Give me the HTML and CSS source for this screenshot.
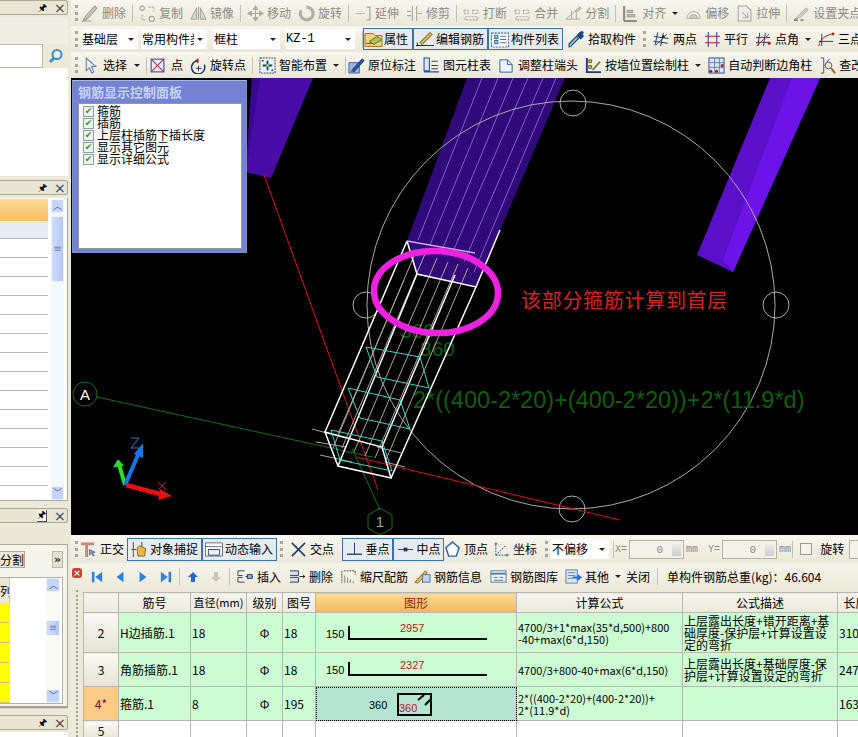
FILE: index.html
```html
<!DOCTYPE html>
<html lang="zh-CN">
<head>
<meta charset="utf-8">
<title>钢筋显示控制面板</title>
<link rel="stylesheet" href="styles.css">
</head>
<body>
<svg class="defs" width="0" height="0" aria-hidden="true">
  <symbol id="i-del" viewBox="0 0 16 16"><path d="M1 15l4-2 9-10-2-2-9 10z" fill="#c8c8c0" stroke="#a0a098"/><path d="M1 15h8" stroke="#a0a098"/></symbol>
  <symbol id="i-copy" viewBox="0 0 16 16"><circle cx="3" cy="3" r="2" fill="none" stroke="#a0a098"/><circle cx="12" cy="13" r="2.5" fill="none" stroke="#a0a098"/><path d="M9 2l5 0M14 2v4M3 9v5h4" stroke="#b0b0a8" fill="none" stroke-dasharray="2 1"/></symbol>
  <symbol id="i-mirror" viewBox="0 0 18 16"><path d="M1 14L7 2v12zM17 14L11 2v12z" fill="#d8d8d0" stroke="#a0a098"/><path d="M9 1v14" stroke="#a0a098"/></symbol>
  <symbol id="i-move" viewBox="0 0 16 16"><path d="M8 1v14M1 8h14M8 1L6 4h4zM8 15l-2-3h4zM1 8l3-2v4zM15 8l-3-2v4z" stroke="#a8a8a0" fill="#c0c0b8"/></symbol>
  <symbol id="i-rot" viewBox="0 0 16 16"><path d="M8 2a6 6 0 1 1-5 3" fill="none" stroke="#b0b0a8" stroke-width="3"/></symbol>
  <symbol id="i-ext" viewBox="0 0 16 16"><path d="M1 8h8" stroke="#a8a8a0" stroke-dasharray="2 1"/><path d="M11 2h3v12h-3" fill="none" stroke="#a0a098"/></symbol>
  <symbol id="i-trim" viewBox="0 0 16 16"><path d="M6 1v14M10 1v14M1 6h4M1 10h4M11 8h4" stroke="#a8a8a0" fill="none"/></symbol>
  <symbol id="i-brk" viewBox="0 0 16 16"><path d="M1 5h4v3H1zM9 5h5v3H9zM2 11h12v3H2z" fill="none" stroke="#a8a8a0" stroke-dasharray="2 1"/></symbol>
  <symbol id="i-split" viewBox="0 0 18 16"><path d="M1 14L15 2M1 14h15M7 14V5M12 14V6" stroke="#a8a8a0" fill="none"/><path d="M11 5l5-4 1 2-5 4z" fill="#c8c8c0" stroke="#a8a8a0"/></symbol>
  <symbol id="i-align" viewBox="0 0 16 16"><path d="M2 1v14M2 15h12" stroke="#8c8c84" stroke-width="2" fill="none"/><path d="M5 5h5v2H5zM5 9h7v2H5z" fill="#c0c0b8" stroke="#a0a098"/></symbol>
  <symbol id="i-off" viewBox="0 0 18 16"><path d="M2 13a7 7 0 0 1 14 0z" fill="none" stroke="#a8a8a0"/><path d="M5 13a4 4 0 0 1 8 0z" fill="#d0d0c8" stroke="#a8a8a0"/></symbol>
  <symbol id="i-str" viewBox="0 0 16 16"><path d="M2 1h8l4 4v10H2z" fill="#eee" stroke="#a8a8a0"/><path d="M6 7l5 5M6 12h5v-5" stroke="#b0b0a8" fill="none"/></symbol>
  <symbol id="i-grip" viewBox="0 0 18 16"><path d="M2 14l6-6 6-6 2 2-8 8z" fill="#d0d0c8" stroke="#a8a8a0"/><path d="M1 15h4M8 15h3" stroke="#808078" stroke-width="2"/></symbol>
  <symbol id="i-attr" viewBox="0 0 20 16"><path d="M1 2h8l2 2h7v11H1z" fill="#f3d27c" stroke="#a57a20"/><path d="M5 10l8-5 5 3-8 5z" fill="#a0c860" stroke="#7a6a20"/><path d="M2 12h6" stroke="#c04020"/></symbol>
  <symbol id="i-edit" viewBox="0 0 20 16"><path d="M1 14h18" stroke="#000"/><path d="M2 11l1 3h16" stroke="#303030" fill="none"/><path d="M5 11L15 1l2 2L7 13z" fill="#e8c050" stroke="#604010"/></symbol>
  <symbol id="i-list" viewBox="0 0 18 16"><path d="M1 2h16v13H1z" fill="#fff" stroke="#4070a0" stroke-dasharray="2 1"/><path d="M4 4h3v3H4zM4 9h3v3H4z" fill="#9cc0e0" stroke="#4070a0"/><path d="M9 5h6M9 8h6M9 11h6" stroke="#5070a0"/></symbol>
  <symbol id="i-pick" viewBox="0 0 16 16"><path d="M1 15l2-1 7-7-2-2-7 7z" fill="#8cc0e0" stroke="#1a4880"/><path d="M8 4l4 4 3-3-1-2 1-2-2-1-2 1z" fill="#1a4880"/></symbol>
  <symbol id="i-two" viewBox="0 0 18 16"><path d="M4 1L3 15M10 1L9 15M1 6h15M1 11h15" stroke="#1a3a7c" fill="none" transform="rotate(8 9 8)"/><path d="M3 14L15 2" stroke="#505050"/><circle cx="11" cy="5" r="1.5" fill="#202020"/></symbol>
  <symbol id="i-par" viewBox="0 0 16 16"><path d="M4 1v14M12 1v14" stroke="#2a4a8c" fill="none"/><path d="M1 5h14M1 11h14" stroke="#b02020" fill="none"/></symbol>
  <symbol id="i-ang" viewBox="0 0 18 16"><path d="M5 1L3 15M11 1L9 15M1 6h15M1 11h15" stroke="#1a3a7c" fill="none"/><path d="M2 15L15 2" stroke="#b02020"/><circle cx="15" cy="12" r="1.6" fill="#c01010"/></symbol>
  <symbol id="i-tri" viewBox="0 0 18 16"><path d="M4 2v13M1 10h15" stroke="#1a3a7c" fill="none"/><path d="M1 15C2 7 9 3 16 2" stroke="#c01010" fill="none"/><circle cx="16" cy="2" r="1.4" fill="#c01010"/></symbol>
  <symbol id="i-sel" viewBox="0 0 16 16"><path d="M4 1v12l3-3 2 5 2-1-2-5h4z" fill="#e8eef4" stroke="#6080a8"/></symbol>
  <symbol id="i-pt" viewBox="0 0 16 16"><rect x="2" y="2" width="12" height="12" fill="#e8eefa" stroke="#2848a0"/><path d="M2 2l12 12M14 2L2 14" stroke="#b03040"/></symbol>
  <symbol id="i-rp" viewBox="0 0 18 18"><path d="M8 4a7 7 0 1 0 7 4" fill="none" stroke="#203860" stroke-width="1.6"/><path d="M9 1l-4 3 4 3z" fill="#a02020"/><path d="M9 9v6M6 12h6" stroke="#203860"/></symbol>
  <symbol id="i-smart" viewBox="0 0 18 18"><rect x="1" y="1" width="16" height="16" fill="#e8f0f4" stroke="#404040" stroke-dasharray="2 1"/><path d="M9 4v4M9 10v4M4 9h4M10 9h4" stroke="#1a5040" stroke-width="2"/><circle cx="4" cy="4" r="1" fill="#c02020"/><circle cx="14" cy="14" r="1" fill="#2040c0"/></symbol>
  <symbol id="i-mark" viewBox="0 0 18 18"><path d="M1 6h11v11H1z" fill="#9cb8e0" stroke="#3860a8"/><path d="M4 14L15 2l2 2L6 16z" fill="#2858b0" stroke="#183070"/><path d="M3 16l2-3" stroke="#c03020"/></symbol>
  <symbol id="i-tab" viewBox="0 0 16 16"><path d="M1 1h5v12h-5zM1 14h14" stroke="#2850a0" fill="#dce8f8"/><path d="M8 4h6M8 8h6M8 11h6" stroke="#404040"/></symbol>
  <symbol id="i-adj" viewBox="0 0 18 18"><path d="M2 3h8l5 5v8H2z" fill="#f0f4fa" stroke="#3060a8"/><path d="M10 3v5h5" fill="none" stroke="#3060a8"/></symbol>
  <symbol id="i-wall" viewBox="0 0 18 18"><path d="M2 1v15h15" stroke="#1a3a90" stroke-width="2" fill="none"/><path d="M4 3h3v3H4zM4 9h3v3H4z" fill="#e8c050" stroke="#805010"/><path d="M8 14L16 5" stroke="#808040" stroke-width="2"/></symbol>
  <symbol id="i-auto" viewBox="0 0 18 18"><rect x="1" y="1" width="16" height="16" fill="#dce8f8" stroke="#304890"/><path d="M7 1v16M12 1v16M1 6h16M1 11h16" stroke="#6080c0"/><circle cx="3" cy="15" r="1.6" fill="#c01010"/><circle cx="9" cy="15" r="1.6" fill="#c01010"/><circle cx="15" cy="9" r="1.6" fill="#c01010"/></symbol>
  <symbol id="i-chk" viewBox="0 0 18 18"><path d="M2 1h3v16H2M6 9l5-7" stroke="#2850a0" fill="none"/><circle cx="10" cy="9" r="3.6" fill="#e8e8d8" stroke="#705030"/><path d="M13 12l4 5" stroke="#906030" stroke-width="2"/></symbol>
  <symbol id="i-ortho" viewBox="0 0 18 18"><path d="M1 3h14M7 3v14" stroke="#c08880" stroke-width="3" fill="none"/><path d="M10 9v6l2-2 2 3 1-1-2-3h3z" fill="#90a0b0" stroke="#607080"/></symbol>
  <symbol id="i-snap" viewBox="0 0 18 18"><path d="M3 1v16M1 9h5" stroke="#8a3020"/><path d="M7 9q0-5 5-3l4 2-1 8H8z" fill="#e8b848" stroke="#906020"/><path d="M12 1v5" stroke="#703010"/></symbol>
  <symbol id="i-dyn" viewBox="0 0 20 18"><path d="M1 2h18v14H1z" fill="#fff" stroke="#607080"/><path d="M1 6h18" stroke="#607080"/><path d="M4 9h12v6H4z" fill="#e8f0f8" stroke="#304060"/></symbol>
  <symbol id="i-cross" viewBox="0 0 18 18"><path d="M2 2l14 14M16 2L2 16" stroke="#1a3a6c" stroke-width="1.6"/></symbol>
  <symbol id="i-perp" viewBox="0 0 18 18"><path d="M1 14h16" stroke="#1a3a6c" stroke-width="1.4"/><path d="M9 2v12" stroke="#1a3a6c"/></symbol>
  <symbol id="i-mid" viewBox="0 0 18 18"><path d="M1 9h16" stroke="#1a3a6c"/><rect x="7" y="7" width="4" height="4" fill="#1a3a6c"/></symbol>
  <symbol id="i-vert" viewBox="0 0 18 18"><path d="M9 1l7 6-3 9H5L2 7z" fill="#fff" stroke="#2860a8" stroke-width="1.5"/></symbol>
  <symbol id="i-coord" viewBox="0 0 18 18"><path d="M3 15h13M3 15V3M3 15l10-10" stroke="#2860a8" stroke-dasharray="2 1" fill="none"/><circle cx="3" cy="3" r="1.5" fill="#808080"/><circle cx="15" cy="15" r="1.5" fill="#808080"/></symbol>
  <symbol id="i-ins" viewBox="0 0 18 16"><path d="M1 2h7M1 2v5h5M1 9v5h7M1 9h5" stroke="#304050" fill="none"/><path d="M9 8h8" stroke="#303030"/><rect x="11" y="6" width="5" height="4" fill="#90b8e0" stroke="#304060"/></symbol>
  <symbol id="i-rem" viewBox="0 0 18 16"><path d="M1 2h9v5H1M1 9h9v5H1" fill="#cfe0f0" stroke="#304050"/><path d="M11 8h6" stroke="#202020"/><path d="M15 6l2 2-2 2z" fill="#202020"/></symbol>
  <symbol id="i-scale" viewBox="0 0 18 18"><path d="M2 3v13" stroke="#404040" stroke-dasharray="2 1"/><path d="M5 16V8M8 16V10M11 16v-4M14 16v-2" stroke="#808080"/><path d="M4 3h12M16 3v4" stroke="#404040" stroke-dasharray="2 1" fill="none"/></symbol>
  <symbol id="i-info" viewBox="0 0 18 18"><path d="M1 15L12 3l2 2L4 16z" fill="#e8c050" stroke="#806020"/><rect x="9" y="7" width="8" height="8" fill="#c0d4ec" stroke="#5070a0"/></symbol>
  <symbol id="i-lib" viewBox="0 0 18 16"><rect x="1" y="2" width="16" height="12" fill="#eef4fc" stroke="#5878a8"/><path d="M1 5h16" stroke="#5878a8" stroke-width="2"/><path d="M4 9h4M10 9h4M4 12h10" stroke="#607090"/></symbol>
  <symbol id="i-oth" viewBox="0 0 18 16"><rect x="1" y="1" width="12" height="14" fill="#dce8f8" stroke="#6080b0"/><path d="M3 4h8M3 7h8M3 10h5" stroke="#6080b0"/><path d="M8 8h5V5l5 4-5 4v-3H8z" fill="#2870d0"/></symbol>
  <symbol id="i-nf" viewBox="0 0 14 14"><path d="M1 1h3v12H1zM13 1v12L5 7z" fill="#2f7fe0"/></symbol>
  <symbol id="i-np" viewBox="0 0 14 14"><path d="M11 1v12L3 7z" fill="#2f7fe0"/></symbol>
  <symbol id="i-nn" viewBox="0 0 14 14"><path d="M3 1v12l8-6z" fill="#2f7fe0"/></symbol>
  <symbol id="i-nl" viewBox="0 0 14 14"><path d="M10 1h3v12h-3zM1 1v12l8-6z" fill="#2f7fe0"/></symbol>
  <symbol id="i-up" viewBox="0 0 12 12"><path d="M6 1l5 5H8v5H4V6H1z" fill="#1e6cc8"/></symbol>
  <symbol id="i-dn" viewBox="0 0 12 12"><path d="M4 1h4v5h3l-5 5-5-5h3z" fill="#c8c8c0"/></symbol>
</svg>

<div class="app">
  <aside class="left">
    <div class="ptitle"><span class="pin">&#x1F588;</span><span class="px">×</span></div>
    <div class="ltools"></div>
    <div class="lsearch"><div class="linput"></div><div class="lbtn"><svg width="16" height="16" viewBox="0 0 16 16"><circle cx="9" cy="6.500" r="4.500" fill="#e8f4fc" stroke="#3a8ccc" stroke-width="2"/><path d="M6 10l-4 4" stroke="#3a8ccc" stroke-width="3"/></svg></div></div>
    <div class="lblank"></div>
    <div class="ptitle"><span class="pin">&#x1F588;</span><span class="px">×</span></div>
    <div class="lgrid">
      <div class="lcol">
        <div class="gh"></div><div class="gsel"></div>
        <div class="gr"></div><div class="gr"></div><div class="gr"></div><div class="gr"></div><div class="gr"></div><div class="gr"></div><div class="gr"></div><div class="gr"></div><div class="gr"></div><div class="gr"></div><div class="gr"></div><div class="gr"></div><div class="gr"></div><div class="gr"></div>
      </div>
      <div class="sb sb-a">
        <div class="sbtn">︿</div><div class="sthumb sthumb-a">≡</div><div class="sgap"></div><div class="sbtn">﹀</div>
      </div>
    </div>
    <div class="ptitle t3"><span class="pin pinbox">&#x1F588;</span><span class="px">×</span></div>
    <div class="lprops">
      <div class="ltabs"><span class="ltab">分割</span><span class="lmore">»</span></div>
      <div class="lpt">
        <div class="lcol2">
          <div class="yh">列</div>
          <div class="yc"></div><div class="yc"></div><div class="yc"></div><div class="yc"></div><div class="yc"></div>
        </div>
        <div class="sb sb-b">
          <div class="sbtn">︿</div><div class="sgap sgap-b"></div><div class="sthumb sthumb-b">≡</div><div class="sgap sgap-c"></div><div class="sbtn">﹀</div>
        </div>
      </div>
    </div>
    <div class="ptitle t4"><span class="pin">&#x1F588;</span><span class="px">×</span></div>
    <div class="lblank"></div>
  </aside>

  <main class="right">
    <div class="tb tb-dis">
      <i class="grip"></i>
      <span class="tool"><svg class="ic"><use href="#i-del"/></svg>删除</span><i class="sep"></i>
      <span class="tool"><svg class="ic"><use href="#i-copy"/></svg>复制</span>
      <span class="tool"><svg class="ic"><use href="#i-mirror"/></svg>镜像</span><i class="sep"></i>
      <span class="tool"><svg class="ic"><use href="#i-move"/></svg>移动</span>
      <span class="tool"><svg class="ic"><use href="#i-rot"/></svg>旋转</span><i class="sep"></i>
      <span class="tool"><svg class="ic"><use href="#i-ext"/></svg>延伸</span>
      <span class="tool"><svg class="ic"><use href="#i-trim"/></svg>修剪</span><i class="sep"></i>
      <span class="tool"><svg class="ic"><use href="#i-brk"/></svg>打断</span>
      <span class="tool"><svg class="ic"><use href="#i-brk"/></svg>合并</span>
      <span class="tool"><svg class="ic"><use href="#i-split"/></svg>分割</span><i class="sep"></i>
      <span class="tool"><svg class="ic"><use href="#i-align"/></svg>对齐<b class="car"></b></span>
      <span class="tool"><svg class="ic"><use href="#i-off"/></svg>偏移</span>
      <span class="tool"><svg class="ic"><use href="#i-str"/></svg>拉伸</span><i class="sep"></i>
      <span class="tool"><svg class="ic"><use href="#i-grip"/></svg>设置夹点</span>
    </div>

    <div class="tb tb-2">
      <i class="grip"></i>
      <span class="combo c1">基础层<b class="car"></b></span>
      <span class="combo c2"><span class="ctext">常用构件类型</span><b class="car"></b></span>
      <span class="combo c3">框柱<b class="car"></b></span>
      <span class="combo c4"><span class="mono">KZ-1</span><b class="car"></b></span>
      <i class="sep sep-n"></i>
      <span class="btn b-attr"><svg class="ic ic-w"><use href="#i-attr"/></svg>属性</span>
      <span class="btn"><svg class="ic ic-w"><use href="#i-edit"/></svg>编辑钢筋</span>
      <span class="btn"><svg class="ic ic-w"><use href="#i-list"/></svg>构件列表</span>
      <span class="tool t-pick"><svg class="ic"><use href="#i-pick"/></svg>拾取构件</span>
      <i class="grip grip-m"></i>
      <span class="tool"><svg class="ic"><use href="#i-two"/></svg>两点</span>
      <span class="tool"><svg class="ic"><use href="#i-par"/></svg>平行</span>
      <span class="tool"><svg class="ic"><use href="#i-ang"/></svg>点角<b class="car"></b></span>
      <span class="tool"><svg class="ic"><use href="#i-tri"/></svg>三点</span>
    </div>

    <div class="tb tb-3">
      <i class="grip"></i>
      <span class="tool t-sel"><svg class="ic"><use href="#i-sel"/></svg>选择<b class="car"></b></span><i class="sep"></i>
      <span class="tool t-pt"><svg class="ic"><use href="#i-pt"/></svg>点</span>
      <span class="tool"><svg class="ic"><use href="#i-rp"/></svg>旋转点</span><i class="sep"></i>
      <span class="tool"><svg class="ic"><use href="#i-smart"/></svg>智能布置<b class="car"></b></span><i class="sep"></i>
      <span class="tool t-mark"><svg class="ic"><use href="#i-mark"/></svg>原位标注</span>
      <span class="tool"><svg class="ic"><use href="#i-tab"/></svg>图元柱表</span>
      <span class="tool"><svg class="ic"><use href="#i-adj"/></svg>调整柱端头</span>
      <span class="tool"><svg class="ic"><use href="#i-wall"/></svg>按墙位置绘制柱<b class="car"></b></span>
      <span class="tool"><svg class="ic"><use href="#i-auto"/></svg>自动判断边角柱</span>
      <span class="tool"><svg class="ic"><use href="#i-chk"/></svg>查改</span>
    </div>

    <section class="view">
      <svg class="scene" viewBox="71 78 787 457" width="787" height="457">
        <path d="M252 78h61l-42 100-25-6z" fill="#4a0ca6"/>
        <path d="M252 78h8l-14 94z" fill="#3a0890"/>
        <path d="M770 78h50l-87 194-36-17z" fill="#5a10c8"/>
        <path d="M792 78h28l-87 194-10-12z" fill="#6c14e8"/>
        <path d="M467 78h98l-89 209-59-13-10-33z" fill="#300a78"/>
        <g stroke="#8a5ad0" fill="none">
          <path d="M482 78L418 240M498 78L430 245M513 78L442 250M528 78L452 254M543 78L464 262M556 78L474 272"/>
        </g>
        <g fill="none" stroke="#aaa" stroke-width="1">
          <circle cx="571" cy="305" r="204"/>
          <circle cx="573" cy="103" r="13"/><circle cx="366" cy="305" r="13"/><circle cx="776" cy="305" r="13"/><circle cx="572" cy="509" r="13"/>
        </g>
        <path d="M264 175L378 490" stroke="#e01010" fill="none"/>
        <path d="M356 457L620 520" stroke="#e01010" fill="none"/>
        <path d="M97 397L372 457M352 448L380 510" stroke="#157015" fill="none"/>
        <circle cx="85" cy="394" r="12" fill="none" stroke="#157015"/>
        <text x="85" y="400" class="axis-a">A</text>
        <path d="M380 508l12 7v13l-12 7-12-7v-13z" fill="none" stroke="#157015"/>
        <text x="380" y="527" class="axis-1">1</text>
        <text x="400" y="338" class="gtx">360</text>
        <text x="420" y="356" class="gtx">360</text>
        <text x="413" y="408" class="gtx gtx-l">2*((400-2*20)+(400-2*20))+2*(11.9*d)</text>
        <text x="521" y="308" class="rtx">该部分箍筋计算到首层</text>
        <g stroke="#b0a49c" fill="none">
          <path d="M414 256L333 448M425 254L342 448M437 258L354 452M448 262L365 456M458 264L375 458M468 268L385 462M404 280L338 434"/>
          <path d="M312 429l33 9M316 442l30 5M377 447l24 6M320 455l32 7M385 462l20 5"/>
        </g>
        <g stroke="#fff" fill="none" stroke-width="1.500">
          <path d="M407 241L325 432M417 274L338 466M476 287L391 478M382 447L455 275"/>
          <path d="M407 241l10 33 59 13 24-57"/>
          <path d="M325 432l13 34 53 12-9-31z"/>
          <path d="M407 241l68 12" stroke="#c8a8f0"/>
        </g>
        <g stroke="#33d8c8" fill="none">
          <path d="M366 347l54 10 9 31-52-11zM348 388l52 12 10 29-50-11zM331 430l51 11 10 30-52-11z"/>
        </g>
        <ellipse cx="436" cy="292" rx="62" ry="41" transform="rotate(2 436 292)" fill="none" stroke="#f020e0" stroke-width="6.500"/>
        <path d="M125 485L118 461" stroke="#28e028" stroke-width="4"/>
        <path d="M118 461l-3 5 7-1z" fill="#28e028" stroke="#28e028" stroke-width="2"/>
        <path d="M125 485L138 455" stroke="#1478e8" stroke-width="4"/>
        <path d="M143 443l-9 11 9 4z" fill="#1478e8"/>
        <path d="M126 485L160 494" stroke="#e81010" stroke-width="4.500"/>
        <path d="M172 496l-12-7-2 11z" fill="#e81010"/>
        <path d="M131 438h8l-8 10h8" stroke="#3c78d8" fill="none"/>
        <path d="M158 482l8 8M166 482l-8 8" stroke="#c02020" fill="none"/>
      </svg>
      <div class="cpanel">
        <div class="cp-title">钢筋显示控制面板</div>
        <ul class="cp-list">
          <li><i class="cb">✔</i>箍筋</li>
          <li><i class="cb">✔</i>插筋</li>
          <li><i class="cb">✔</i>上层柱插筋下插长度</li>
          <li><i class="cb">✔</i>显示其它图元</li>
          <li><i class="cb">✔</i>显示详细公式</li>
        </ul>
      </div>
    </section>

    <div class="tb tb-snap">
      <i class="grip"></i>
      <span class="tool"><svg class="ic"><use href="#i-ortho"/></svg>正交</span>
      <span class="btn b-first"><svg class="ic ic-w"><use href="#i-snap"/></svg>对象捕捉</span>
      <span class="btn"><svg class="ic ic-w"><use href="#i-dyn"/></svg>动态输入</span>
      <i class="grip grip-s"></i>
      <span class="tool"><svg class="ic"><use href="#i-cross"/></svg>交点</span>
      <span class="btn b-s"><svg class="ic"><use href="#i-perp"/></svg>垂点</span>
      <span class="btn b-s"><svg class="ic"><use href="#i-mid"/></svg>中点</span>
      <span class="tool"><svg class="ic"><use href="#i-vert"/></svg>顶点</span>
      <span class="tool t-coord"><svg class="ic"><use href="#i-coord"/></svg>坐标</span>
      <i class="grip"></i>
      <span class="combo c5">不偏移<b class="car"></b></span>
      <i class="sep"></i>
      <span class="lab">X=</span><span class="spin">0<b class="sp"></b></span><span class="lab">mm</span>
      <span class="lab lab-y">Y=</span><span class="spin">0<b class="sp"></b></span><span class="lab">mm</span>
      <i class="sep"></i>
      <i class="chk"></i><span class="rot">旋转</span><span class="spin spin-e"></span>
    </div>

    <div class="tb tb-list">
      <span class="close">×</span>
      <svg class="nv nv-a"><use href="#i-nf"/></svg>
      <svg class="nv"><use href="#i-np"/></svg>
      <svg class="nv"><use href="#i-nn"/></svg>
      <svg class="nv"><use href="#i-nl"/></svg>
      <i class="sep"></i>
      <svg class="nv nv-u"><use href="#i-up"/></svg>
      <svg class="nv"><use href="#i-dn"/></svg>
      <i class="sep"></i>
      <span class="tool"><svg class="ic"><use href="#i-ins"/></svg>插入</span>
      <span class="tool"><svg class="ic"><use href="#i-rem"/></svg>删除</span>
      <span class="tool m-1"><svg class="ic"><use href="#i-scale"/></svg>缩尺配筋</span>
      <span class="tool m-2"><svg class="ic"><use href="#i-info"/></svg>钢筋信息</span>
      <span class="tool"><svg class="ic"><use href="#i-lib"/></svg>钢筋图库</span>
      <span class="tool m-1"><svg class="ic"><use href="#i-oth"/></svg>其他<b class="car"></b></span>
      <span class="tool m-3">关闭</span>
      <i class="sep"></i>
      <span class="tool p-2">单构件钢筋总重(kg)：46.604</span>
    </div>

    <div class="tablewrap">
      <table class="rt">
        <colgroup><col class="w-h"><col class="w-a"><col class="w-b"><col class="w-c"><col class="w-d"><col class="w-e"><col class="w-f"><col class="w-g"><col class="w-i"></colgroup>
        <thead>
          <tr><th></th><th>筋号</th><th class="th-d">直径(mm)</th><th>级别</th><th>图号</th><th class="th-on">图形</th><th>计算公式</th><th>公式描述</th><th>长度</th></tr>
        </thead>
        <tbody>
          <tr class="r2">
            <th>2</th><td class="name">H边插筋.1</td><td class="dia">18</td><td class="ctr">Φ</td><td>18</td>
            <td class="shape"><svg width="200" height="38" viewBox="316 613 200 38"><text x="326" y="637" class="s-t">150</text><path d="M349 625v13h138" class="s-l"/><text x="400" y="631" class="s-r">2957</text></svg></td>
            <td class="fm">4700/3+1*max(35*d,500)+800<br>-40+max(6*d,150)</td>
            <td class="ds">上层露出长度+错开距离+基础厚度-保护层+计算设置设定的弯折</td><td>310</td>
          </tr>
          <tr class="r3">
            <th>3</th><td class="name">角筋插筋.1</td><td class="dia">18</td><td class="ctr">Φ</td><td>18</td>
            <td class="shape"><svg width="200" height="33" viewBox="316 653 200 33"><text x="326" y="674" class="s-t">150</text><path d="M349 662v13h138" class="s-l"/><text x="400" y="669" class="s-r">2327</text></svg></td>
            <td class="fm">4700/3+800-40+max(6*d,150)</td>
            <td class="ds">上层露出长度+基础厚度-保护层+计算设置设定的弯折</td><td>247</td>
          </tr>
          <tr class="r4">
            <th class="cur">4*</th><td class="name">箍筋.1</td><td class="dia">8</td><td class="ctr">Φ</td><td>195</td>
            <td class="shape shape-on"><svg width="200" height="33" viewBox="316 687 200 33"><text x="369" y="709" class="s-t">360</text><path d="M398 694h33v21h-33zM418 700l6-5M425 705l6-6" class="s-l"/><text x="399" y="712" class="s-r">360</text></svg></td>
            <td class="fm">2*((400-2*20)+(400-2*20))+<br>2*(11.9*d)</td>
            <td class="ds"></td><td>163</td>
          </tr>
          <tr class="r5"><th>5</th><td></td><td class="dia"></td><td></td><td></td><td></td><td></td><td></td><td></td></tr>
        </tbody>
      </table>
    </div>
  </main>
</div>
</body>
</html>
```

FILE: styles.css
```css
* { box-sizing: border-box; }
html, body { margin: 0; padding: 0; }
body {
  width: 858px; height: 737px; overflow: hidden;
  background: #ece9d8; color: #000;
  font: 12px/1 "Noto Sans CJK SC", "Liberation Sans", sans-serif;
}
.defs { position: absolute; }
.app { display: grid; grid-template-columns: 71px 787px; width: 858px; height: 737px; overflow: hidden; }

/* left dock */
.left { display: flex; flex-direction: column; width: 68px; height: 737px; background: #ece9d8; overflow: hidden; }
.ptitle {
  flex: none; display: flex; justify-content: flex-end; align-items: center; gap: 7px;
  height: 15px; padding-right: 3px; background: #e8e5d4; border: 1px solid #aca899; border-left: 0; border-radius: 0 3px 3px 0;
}
.pin { font: 10px/1 "DejaVu Sans", sans-serif; width: 10px; color: #000; text-align: center; }
.pinbox { background: #f4f2e6; border-right: 1px solid #555; border-bottom: 1px solid #555; height: 12px; }
.px { font: 14px/1 "DejaVu Sans", sans-serif; color: #444; width: 10px; text-align: center; }
.ltools { flex: none; height: 26px; margin-top: 3px; background: #f0eee2; }
.lsearch { flex: none; display: flex; height: 24px; background: #ece9d8; }
.linput { width: 43px; background: #fff; border: 1px solid #b8b8a8; border-left: 0; }
.lbtn { flex: 1; display: flex; align-items: center; justify-content: center; }
.lblank { flex: 1; background: #fff; }
.lsearch + .lblank { flex: none; height: 108px; margin-bottom: 4px; }
.lgrid { flex: none; display: flex; height: 303px; margin-top: 3px; padding: 1px 3px 0 0; background: #fff; border-right: 1px solid #aca899; border-bottom: 1px solid #aca899; overflow: hidden; }
.lcol { width: 48px; }
.gh { height: 22px; background: linear-gradient(#fcdc98, #f4c060); }
.gsel { height: 18px; background: #e4ecf4; border-bottom: 1px solid #b8b8b0; }
.gr { height: 19px; border-bottom: 1px solid #b8b8b0; }
.sb { display: flex; flex-direction: column; margin-left: 3px; width: 13px; background: #f4f8ff; color: #3a5a90; }
.sbtn { flex: none; height: 14px; background: #c4d4fa; border: 1px solid #eef4ff; font: 9px/12px "DejaVu Sans", sans-serif; text-align: center; overflow: hidden; }
.sthumb { flex: none; background: linear-gradient(90deg, #d0dcfc, #b4c8f4); border: 1px solid #eef4ff; color: #7088b8; display: flex; align-items: center; justify-content: center; font: 10px/1 "DejaVu Sans", sans-serif; }
.sthumb-a { height: 66px; margin-top: 3px; }
.sgap { flex: 1; }
.t3 { margin-top: 7px; }
.lprops { flex: none; height: 163px; margin-top: 21px; padding: 6px 4px 3px 0; background: #f6f5ec; border: 1px solid #aca899; border-left: 0; box-shadow: 0 1px 1px #999; }
.ltabs { display: flex; justify-content: space-between; height: 17px; }
.ltab { width: 25px; line-height: 15px; background: #ece9d8; border: 1px solid #aca899; border-left: 0; text-align: right; overflow: hidden; }
.lmore { width: 11px; margin-right: 0; font: bold 11px/15px "DejaVu Sans", sans-serif; color: #223; text-align: center; background: #e4e1d0; border: 1px solid #b8b8a8; }
.lpt { display: flex; height: 127px; margin-top: 9px; background: #fff; border: 1px solid #b0b0a8; border-left: 0; }
.lcol2 { width: 10px; }
.yh { height: 25px; line-height: 25px; background: #ece9d8; border-right: 1px solid #c8c8b8; text-align: right; overflow: hidden; }
.yc { height: 20px; background: #ffff00; border-bottom: 1px solid #c8c090; }
.sb-b { margin-left: 36px; width: 14px; background: #fafaf4; }
.sgap-b { flex: none; height: 28px; }
.sgap-c { flex: 1; }
.sthumb-b { height: 16px; }
.t4 { margin-top: 8px; }
.t4 + .lblank { margin-top: 2px; }

/* right */
.right { display: flex; flex-direction: column; width: 787px; height: 737px; overflow: hidden; }
.tb {
  flex: none; display: flex; align-items: center; gap: 7px; height: 26px; padding-left: 4px;
  white-space: nowrap; background: linear-gradient(#f8f6ee, #ebe8d8);
}
.tb-dis { color: #8c8c84; }
.grip { flex: none; width: 3px; height: 16px; margin-right: -3px; border-left: 3px dotted #a8a8a0; }
.grip-m { margin-right: 0; }
.sep { flex: none; width: 1px; height: 17px; background: #c4c2b2; margin: 0 -1px; }
.tool { flex: none; display: inline-flex; align-items: center; gap: 3px; }
.ic { flex: none; width: 17px; height: 17px; }
.ic-w { width: 20px; }
.car { flex: none; display: inline-block; width: 0; height: 0; margin-left: 3px; border: 3.500px solid transparent; border-top: 3.500px solid #222; border-bottom: 0; }
.combo { flex: none; display: inline-flex; align-items: center; justify-content: space-between; height: 20px; padding: 0 3px 0 1px; background: #fff; }
.combo .car { margin-right: 1px; }
.ctext { width: 53px; overflow: hidden; }
.c1 { width: 57px; margin-left: -1px; }
.c2 { width: 66px; margin-left: -4px; }
.c3 { width: 67px; margin-left: -1px; }
.c4 { width: 69px; margin-left: -1px; padding-left: 0; }
.mono { font: 12px "Liberation Mono", monospace; }
.sep-n { margin-left: 0; }
.btn { flex: none; display: inline-flex; align-items: center; justify-content: flex-start; gap: 1px; height: 22px; width: 75px; padding-left: 1px; margin-right: -7px; background: #e6ebef; border: 1px solid #3f6fa8; }
.b-attr { width: 50px; margin-left: -6px; padding-left: 0; gap: 0; }
.t-pick { margin-left: 5px; }
.t-sel { margin-left: 0; gap: 4px; }
.t-pt { margin-left: -4px; gap: 5px; }
.t-mark { margin-left: -4px; }
.view { flex: none; position: relative; height: 457px; background: #000; overflow: hidden; }
.scene { display: block; }
.cpanel {
  position: absolute; left: 1px; top: 2px; width: 175px; height: 173px; padding: 0 4px 4px 5px;
  background: #7482d4; border: 1px solid #8090c0; border-top-color: #a8b8e8;
}
.cp-title { height: 22px; line-height: 21px; font-size: 13px; font-weight: 700; color: #c4d4f0; }
.cp-list { list-style: none; margin: 0; padding: 1px 0 0 4px; height: 146px; background: #fff; border: 1px solid #8a98a8; }
.cp-list li { display: flex; align-items: center; height: 12px; gap: 3px; font-size: 12px; }
.cb { flex: none; width: 11px; height: 11px; background: #f0f4e8; border: 1px solid #88a0a8; color: #2a9a2a; font: 9px/9px "DejaVu Sans", sans-serif; text-align: center; }
.axis-a { font: 15px "Liberation Sans", sans-serif; fill: #fff; text-anchor: middle; }
.axis-1 { font: 15px "Liberation Sans", sans-serif; fill: #9a9; text-anchor: middle; }
.gtx { font: 21px "Liberation Sans", sans-serif; fill: #0c5f0c; }
.gtx-l { font-size: 23.500px; }
.rtx { font: 20px "Noto Sans CJK SC", sans-serif; fill: #d82020; letter-spacing: 0.700px; }

.tb-snap { height: 28px; gap: 5px; }
.tb-snap .btn { height: 23px; margin-right: -5px; }
.tb-snap .tool { margin-right: 3px; }
.b-first { margin-left: -5px; }
.tb-snap .b-s { width: 51px; justify-content: center; gap: 3px; padding-left: 0; }
.grip-s { margin: 0 2px 0 3px; }
.tb-snap .t-coord { margin-left: -3px; }
.c5 { width: 58px; margin-left: 1px; }
.lab { flex: none; font: 10px "Liberation Mono", monospace; color: #888; margin: 0 -3px; }
.lab-y { margin-left: 8px; }
.spin { flex: none; position: relative; display: inline-block; width: 55px; height: 19px; padding-right: 20px; line-height: 18px; text-align: right; font: 11px/18px "Liberation Mono", monospace; color: #888; background: #f4f2e8; border: 1px solid #b4b2a4; }
.sp { position: absolute; right: 2px; top: 2px; width: 9px; height: 13px; background: linear-gradient(#eee, #ccc); }
.spin-e { width: 30px; }
.chk { flex: none; width: 12px; height: 12px; margin-left: 3px; background: #f6f4ea; border: 1px solid #9a9a90; }
.rot { flex: none; margin-left: 3px; }

.tb-list { height: 27px; gap: 8px; padding-left: 1px; background: linear-gradient(#f6f4ea, #ece9da); }
.close { flex: none; width: 10px; height: 10px; margin-top: -8px; font: bold 9px/10px "DejaVu Sans", sans-serif; color: #fff; text-align: center; background: #d04030; border-radius: 3px; }
.nv { flex: none; width: 12px; height: 12px; margin-left: 3px; }
.nv-a { margin-left: 1px; }
.nv-u { margin-left: 0; }
.m-1 { margin-left: -1px; }
.m-2 { margin-left: -2px; }
.m-3 { margin-left: -3px; }
.p-2 { margin-left: 2px; }

.tablewrap { flex: 1; position: relative; padding: 2px 0 0 12px; overflow: hidden; background: #ece9d8; }
.tablewrap::before { content: ""; position: absolute; left: 5px; top: 0; bottom: 0; border-left: 2px dotted #a0a098; }
.rt { table-layout: fixed; width: 790px; border-collapse: collapse; background: #fff; font-size: 11px; }
.w-h { width: 35px; } .w-a { width: 72px; } .w-b { width: 56px; } .w-c { width: 36px; } .w-d { width: 33px; }
.w-e { width: 201px; } .w-f { width: 166px; } .w-g { width: 155px; } .w-i { width: 36px; }
.rt th, .rt td { border: 1px solid #b4b8b4; padding: 0 1px; overflow: hidden; font-weight: 400; white-space: nowrap; }
.rt thead th { height: 20px; font-size: 12px; text-align: center; background: linear-gradient(#f6f4ec, #ece9dc); }
.rt thead .th-d { font-size: 11px; }
.rt thead .th-on { color: #9a1818; background: linear-gradient(#fcdc98, #f2b85c); }
.rt tbody th { text-align: center; font-size: 12px; background: linear-gradient(#faf8f2, #e6e3d6); }
.rt tbody td { background: #ccfdd2; font-size: 12px; }
.r2 { height: 40px; } .r3 { height: 34px; } .r4 { height: 34px; } .r5 { height: 20px; }
.rt .r5 td { background: #fff; }
.rt .cur { background: #fdcb88; color: #7a1010; }
.rt td.dia { border-left: 1px solid #000; padding-left: 1px; }
.rt td.ctr { text-align: center; }
.rt td.fm { font-size: 11px; line-height: 12px; }
.rt td.ds { font-size: 12px; line-height: 12px; white-space: normal; }
.rt td.shape { padding: 0; }
.rt td.shape svg { display: block; }
.rt td.shape-on { background: #b4e4d2; outline: 1px dotted #000; outline-offset: -1px; }
.s-t { font: 11px "Liberation Sans", sans-serif; fill: #000; }
.s-r { font: 11px "Liberation Sans", sans-serif; fill: #c01818; }
.s-l { fill: none; stroke: #000; stroke-width: 2; }
```
